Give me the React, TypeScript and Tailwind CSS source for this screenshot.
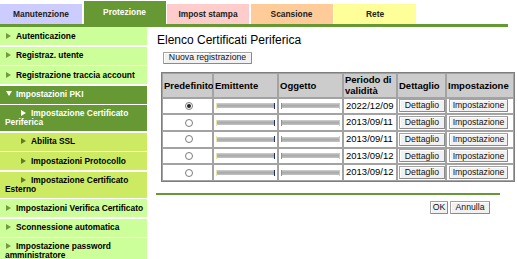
import type { ReactNode } from "react";

type Tone = "light" | "dark" | "lime";

type NavItem = {
  label: string;
  tone: Tone;
  sub?: boolean;
  open?: boolean;
  tall?: boolean;
};

const tabs = [
  { label: "Manutenzione", className: "bg-[#ccccff] text-[#222] h-[20.5px]" },
  { label: "Protezione", className: "bg-[#669933] text-white h-[23.5px]" },
  { label: "Impost stampa", className: "bg-[#ffcccc] text-[#222] h-[20.5px]" },
  { label: "Scansione", className: "bg-[#ffcc99] text-[#222] h-[20.5px]" },
  { label: "Rete", className: "bg-[#ffff99] text-[#222] h-[20.5px]" },
];

const navItems: NavItem[] = [
  { label: "Autenticazione", tone: "light" },
  { label: "Registraz. utente", tone: "light" },
  { label: "Registrazione traccia account", tone: "light" },
  { label: "Impostazioni PKI", tone: "dark", open: true },
  { label: "Impostazione Certificato Periferica", tone: "dark", sub: true, tall: true },
  { label: "Abilita SSL", tone: "lime", sub: true },
  { label: "Impostazioni Protocollo", tone: "lime", sub: true },
  { label: "Impostazione Certificato Esterno", tone: "lime", sub: true, tall: true },
  { label: "Impostazioni Verifica Certificato", tone: "light" },
  { label: "Sconnessione automatica", tone: "light" },
  { label: "Impostazione password amministratore", tone: "light", tall: true },
];

const toneClass: Record<Tone, string> = {
  light: "bg-[#ccff99] text-black",
  dark: "bg-[#669933] text-white",
  lime: "bg-[#cceb62] text-black",
};

const arrowColor: Record<Tone, string> = {
  light: "#76983f",
  dark: "#ffffff",
  lime: "#5f7a2a",
};

const certificates = [
  { checked: true, expires: "2022/12/09" },
  { checked: false, expires: "2013/09/11" },
  { checked: false, expires: "2013/09/11" },
  { checked: false, expires: "2013/09/12" },
  { checked: false, expires: "2013/09/12" },
];

const Arrow = ({ color, open }: { color: string; open?: boolean }) =>
  open ? (
    <svg width="6" height="5" viewBox="0 0 6 5" className="mr-[4px] ml-[1px] inline-block align-[1px]">
      <polygon points="0,0 6,0 3,5" fill={color} />
    </svg>
  ) : (
    <svg width="5" height="6" viewBox="0 0 5 6" className="mr-[5px] ml-[1px] inline-block align-[0px]">
      <polygon points="0,0 5,3 0,6" fill={color} />
    </svg>
  );

const Button = ({ children, className = "" }: { children: ReactNode; className?: string }) => (
  <button
    type="button"
    className={`flex items-center justify-center rounded-[1px] border border-[#a2a2a2] border-b-[#8a8a8a] border-r-[#8a8a8a] bg-[#f1f1f1] text-[8.7px] leading-none text-[#111] shadow-[inset_1px_1px_0_#ffffff] ${className}`}
  >
    {children}
  </button>
);

// blurred-out issuer / subject values
const Redacted = ({ left, right }: { left: string; right: string }) => (
  <div className="flex h-full items-center px-[2px]">
    <span className="h-[6px] w-[1px]" style={{ background: left }} />
    <span className="h-[5px] flex-1 bg-[linear-gradient(180deg,#cfcfcf,#a9a9a9_50%,#c2c2c2)] blur-[0.3px]" />
    <span className="h-[6px] w-[1px]" style={{ background: right }} />
  </div>
);

const Radio = ({ checked }: { checked: boolean }) => (
  <span className="flex h-[8px] w-[8px] items-center justify-center rounded-full border border-[#7b7b7b] bg-white">
    {checked ? <span className="h-[4px] w-[4px] rounded-full bg-[#222]" /> : null}
  </span>
);

export default function App() {
  return (
    <div className="h-[259px] w-[517px] overflow-hidden bg-white font-['Liberation_Sans',Arial,sans-serif] text-black">
      <div className="flex h-[24px] items-end gap-[1.5px]">
        {tabs.map((tab) => (
          <div
            key={tab.label}
            className={`flex w-[82px] items-center justify-center pt-[1px] text-[8.4px] font-bold ${tab.className}`}
          >
            {tab.label}
          </div>
        ))}
      </div>
      <div className="h-[2.5px] w-[508px] bg-[#669933]" />

      <div className="flex">
        <nav className="mt-[0.5px] flex w-[147px] shrink-0 flex-col gap-[1.5px]">
          {navItems.map((item) => (
            <div
              key={item.label}
              className={`pl-[5px] text-[8.4px] font-bold leading-[9px] ${item.tall ? "py-[4px]" : "py-[4.5px]"} ${
                item.sub ? "indent-[15px]" : ""
              } ${toneClass[item.tone]}`}
            >
              <Arrow color={arrowColor[item.tone]} open={item.open} />
              {item.label}
            </div>
          ))}
        </nav>

        <main className="ml-[9px] flex flex-col items-start pt-[6px]">
          <h1 className="ml-[1px] text-[12px] leading-[14px]">Elenco Certificati Periferica</h1>
          <Button className="ml-[7px] mt-[5px] h-[12px] w-[89px]">Nuova registrazione</Button>

          <div className="ml-[5px] mt-[8px] grid w-[354px] grid-cols-[51px_65px_65px_54px_49px_68px] border border-[#7f7f7f] text-[9.5px]">
            {["Predefinito", "Emittente", "Oggetto", "Periodo di validità", "Dettaglio", "Impostazione"].map((h) => (
              <div
                key={h}
                className="flex h-[25px] items-center border border-[#a3a3a3] bg-[#cccccc] pl-[1px] font-bold leading-[11px]"
              >
                {h}
              </div>
            ))}
            {certificates.map((row, i) => (
              <div key={i} className="contents">
                <div className="flex h-[16.7px] items-center justify-center border border-[#a3a3a3] pl-[2px]">
                  <Radio checked={row.checked} />
                </div>
                <div className="h-[16.7px] border border-[#a3a3a3]">
                  <Redacted left="#ece6a6" right="#1d2d6b" />
                </div>
                <div className="h-[16.7px] border border-[#a3a3a3]">
                  <Redacted left="#c9805a" right="#9fd6ea" />
                </div>
                <div className="flex h-[16.7px] items-center border border-[#a3a3a3] pl-[2px]">{row.expires}</div>
                <div className="flex h-[16.7px] items-center border border-[#a3a3a3] pl-[1px]">
                  <Button className="h-[13px] w-[46px]">Dettaglio</Button>
                </div>
                <div className="flex h-[16.7px] items-center border border-[#a3a3a3] pl-[2px]">
                  <Button className="h-[13px] w-[59px]">Impostazione</Button>
                </div>
              </div>
            ))}
          </div>

          <div className="mt-[11px] h-[2px] w-[344px] bg-[#669933]" />
          <div className="mt-[6px] flex w-[334px] justify-end gap-[2px]">
            <Button className="h-[13px] w-[18px]">OK</Button>
            <Button className="h-[13px] w-[40px]">Annulla</Button>
          </div>
        </main>
      </div>
    </div>
  );
}
